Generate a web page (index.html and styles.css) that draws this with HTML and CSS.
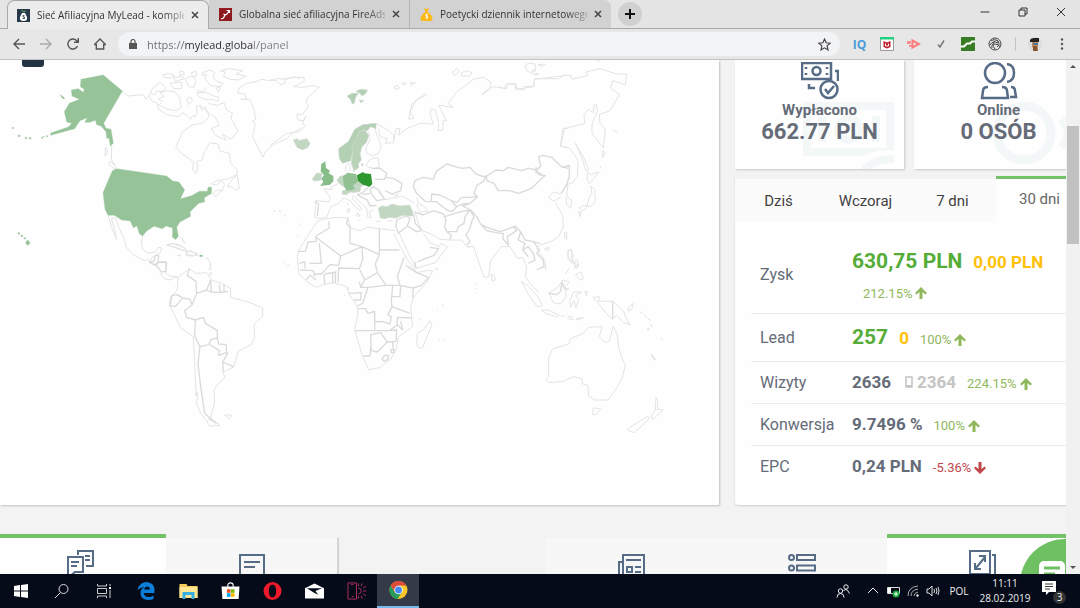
FILE: index.html
```html
<!DOCTYPE html>
<html lang="pl">
<head>
<meta charset="utf-8">
<title>Sieć Afiliacyjna MyLead</title>
<link rel="stylesheet" href="styles.css">
</head>
<body>
<header class="browser">
  <div class="tabstrip">
    <div class="tab tab-current">
      <svg class="favicon" viewBox="0 0 13 13"><path fill="#26384a" d="M0 0h13v13H0z"/><path fill="#fff" d="M5 4h3l2 4q1 4-3.500 4T3 8z"/><path d="m4.500 1 2 2 2-1" stroke="#6cc06c" fill="none"/><path d="M7.500 6.500h-1.500v1.500h1.500v1.500h-2" stroke="#26384a" fill="none" stroke-width=".8"/></svg>
      <button class="tab-title">Sieć Afiliacyjna MyLead - komple</button>
      <button class="tab-close" aria-label="Zamknij"><svg viewBox="0 0 8 8"><path d="m1 1 6 6m0-6-6 6"/></svg></button>
    </div>
    <div class="tab">
      <svg class="favicon" viewBox="0 0 13 13"><path fill="#8e1a20" d="M0 0h13v13H0z"/><path d="m2 11 2.500-1L6 7l2-1 2-3M7.500 2.500h3V5M4.500 6l1.500 1" stroke="#fff" fill="none" stroke-width="1.200"/></svg>
      <button class="tab-title">Globalna sieć afiliacyjna FireAds -</button>
      <button class="tab-close" aria-label="Zamknij"><svg viewBox="0 0 8 8"><path d="m1 1 6 6m0-6-6 6"/></svg></button>
    </div>
    <div class="tab tab-last">
      <svg class="favicon" viewBox="0 0 13 13"><path fill="#fbb91c" d="m4 0 2 1 3-1-1.500 4q5 3 5 7 0 2-2 2H2.500q-2 0-2-2 0-4 5-7z"/><path d="M8 6.500H6v1.700h1.500V10h-2M6.700 5.700v5" stroke="#fff" fill="none" stroke-width=".8"/></svg>
      <button class="tab-title">Poetycki dziennik internetowego</button>
      <button class="tab-close" aria-label="Zamknij"><svg viewBox="0 0 8 8"><path d="m1 1 6 6m0-6-6 6"/></svg></button>
    </div>
    <button class="tab-new" aria-label="Nowa karta"><svg viewBox="0 0 10 10"><path d="M5 0v10M0 5h10"/></svg></button>
    <div class="window-buttons">
      <button aria-label="Minimalizuj"><svg viewBox="0 0 10 10"><path d="M.5 5h9"/></svg></button>
      <button aria-label="Przywróć"><svg viewBox="0 0 10 10"><path d="M1 3h6v6H1zM3 3V1h6v6H7"/></svg></button>
      <button aria-label="Zamknij okno"><svg viewBox="0 0 10 10"><path d="m1 1 8 8m0-8-8 8"/></svg></button>
    </div>
  </div>
  <div class="toolbar">
    <nav class="nav-buttons">
      <button aria-label="Wstecz"><svg viewBox="0 0 12 12"><path d="M12 6H1m5-5L1 6l5 5"/></svg></button>
      <button class="faded" aria-label="Dalej"><svg viewBox="0 0 12 12"><path d="M0 6h11M6 1l5 5-5 5"/></svg></button>
      <button aria-label="Odśwież"><svg viewBox="0 0 12 12"><path d="M10.500 8A5 5 0 1 1 9.500 2.500L11 4M11.300 0v4.300H7"/></svg></button>
      <button aria-label="Strona główna"><svg viewBox="0 0 12 12"><path d="M.5 6.500 6 1l5.500 5.500H9.700V11H2.300V6.500z"/></svg></button>
    </nav>
    <div class="omnibox">
      <svg class="lock" viewBox="0 0 8 10"><path fill="#555" d="M0 4h8v6H0z"/><path d="M2 4V2.500a2 2 0 0 1 4 0V4" fill="none" stroke="#555" stroke-width="1.200"/></svg>
      <input class="address" type="text" aria-label="Adres" value="https://mylead.global/panel">
      <button class="star" aria-label="Dodaj zakładkę"><svg viewBox="0 0 12 12"><path d="m6 1 1.500 3.400 3.700.4-2.800 2.500.8 3.700L6 9.100 2.800 11l.8-3.700L.8 4.800l3.700-.4z"/></svg></button>
    </div>
    <div class="extensions">
      <button class="iq" aria-label="IQ">IQ</button>
      <button aria-label="Ochrona"><svg viewBox="0 0 14 14"><path d="M.5 1h13v12.500H.5z" fill="#fff" stroke="#999"/><path fill="#20d080" d="M0 0h14v2.500H0z"/><path fill="#c01c2c" d="m3.500 4 3.500 1.500L10.500 4v6L7 11.500 3.500 10z"/><path d="M5.500 6.500v2.500h3V6.500" fill="none" stroke="#fff"/></svg></button>
      <button aria-label="Wideo"><svg viewBox="0 0 14 14"><path d="M5.500 3.500v7L12 7z" fill="none" stroke="#fa7d7d" stroke-width="2"/><path d="M0 4h4v3H0zM2 8h3v2H2z" fill="#fa8c8c"/></svg></button>
      <button aria-label="Gotowe"><svg viewBox="0 0 14 14"><path d="m4 7.500 2 2.500 4-6.500" fill="none" stroke="#777" stroke-width="1.500"/></svg></button>
      <button aria-label="Statystyki"><svg viewBox="0 0 14 14"><path fill="#397d24" d="M0 0h14v14H0z"/><path d="M0 9.500h3l3-3h3l2-2h3" fill="none" stroke="#fff" stroke-width="2"/></svg></button>
      <button aria-label="Narzędzie"><svg viewBox="0 0 14 14" fill="none" stroke="#454545"><circle cx="7" cy="7" r="6"/><path d="M3 4q4-3 8 1M2 8q3-5 8-2M4 11q-1-4 3-4t5 3M7 4q-4 3 0 8M9 3q4 4 0 7"/></svg></button>
      <i class="bar"></i>
      <button aria-label="Profil"><svg viewBox="0 0 14 14"><circle cx="7" cy="7" r="7" fill="#dcdcdc"/><path fill="#c98a52" d="M4 4h6v6l-3 2-3-2z"/><path fill="#222" d="M2 5V3q1-2 4-2h5v4z"/><path fill="#4774a8" d="M5 6h5v2H5z"/><path fill="#8a542c" d="M5 9h4l1 5H5z"/></svg></button>
      <button class="menu" aria-label="Menu"><svg viewBox="0 0 14 14" fill="#555"><circle cx="7" cy="2.500" r="1.200"/><circle cx="7" cy="7" r="1.200"/><circle cx="7" cy="11.500" r="1.200"/></svg></button>
    </div>
  </div>
</header>

<div class="viewport">
  <main class="page">
    <div class="top-row">
      <section class="map-card">
        <button class="zoom-out" aria-label="Pomniejsz mapę"></button>
        <svg class="map" viewBox="0 60 719 446" role="img" aria-label="Mapa świata">
          <!-- North America -->
          <g transform="translate(0 60) scale(.33333)">
            <g class="thin">
              <path d="M367 93 384 108 430 104 438 118 447 105 455 122 472 130 475 148 500 164 535 170 548 158 560 166 572 178 578 165 584 172 592 158 588 140 600 136 605 150 616 140 628 170 606 190 578 194 548 215 527 262 545 280 580 305 578 330 588 340 593 325 590 305 606 300 614 275 630 248 655 252 658 272 680 278 688 280 692 310 712 330 710 345 680 358 650 362 634 372 650 375 665 362 674 374 665 392 647 411 640 400 650 390 670 392"/>
              <path d="M712 345 718 385 706 390 700 382 682 379 696 359z"/>
              <path d="m450 100 10-18 20-14 18 14-10 12-20 0-3 10zM488 44l20-3 16 5-12 8-20-2zM540 33l12 3 0 8-12 2zM480 98l20-6 24 3 14 17 6 30-14 10-25-3-28-14 10-10-12-8 18-8zM556 58l18-10 14 12-6 22-16-2zM574 38l14-4 2 14-12 2zM560 118l10-8 8 12-12 12zM590 98l30 0 22 10 14 4-2 12-18-6-16 2-24-10zM608 38l22-8 14 8-6 12 12 14 20 6-12 10-28-4-16-20 6-12-14 2zM660 32l30-6 38 6-20 10 30 6-22 12-26-2-20-10 6-12zM648 86l14-8-6 18zM520 52l24-2 10 6-28 8zM510 70l34-4 2 20-26 0z"/>
              <path d="M625 130 650 136 672 128 680 150 698 160 692 174 714 212 694 238 668 222 678 240 646 226 634 206 658 196 646 172 628 160 600 136M590 90l16 6 14-12"/>
              <path d="M900 55 882 51 858 58 828 56 808 62 786 58 764 66 740 70 718 84 712 98 734 102 740 118 722 118 750 118 762 150 768 178 756 184 766 192 758 230 774 262 789 292 796 276 820 254 860 236 880 218 900 206"/>
              <path d="M335 258 334 300 348 320 344 328 326 312 328 304 346 316M316 262l6 4-2 16-5 6zM324 464 334 500 350 538 344 508 334 476 346 474 356 500 374 540 378 560 400 584 432 602 446 598 476 628M428 527 424 547 428 568 444 580 466 576 474 562 486 564 480 578 456 592 450 604"/>
              <path d="m500 556 18-6 20 4 18 12 4 8-18-6-20-8zM560 576l14-4 18 14-12 0-16-1zM534 586l8 2zM540 530l14 16M546 542l12 10M820 452l6 2M838 450l4 4M852 464l6 4M840 460l3 3M618 592l6 4 8 14 0 16-6 2"/>
            </g>
            <g class="fill-mid">
              <path d="m243 58 67-13 57 48-56 97 7 15 15 3 7 42-9 8-4-23-7 0-2-20-15-17-13-4-4-13-16 6-16 0 8-14-22 9-16 24-72 20v-7l53-18 10-11-15-4-7-31 15-25 30-12-22-10-2-18 21-4 15 11 3-9-12-8zM180 104l10 6 4 7-6-1zM37 202h4v4h-4zM55 225h5v5h-5zM75 232h5v4h-5zM87 233h6v4h-6zM124 232l10-3-8 7zM139 227h5v3h-5z"/>
              <path d="m350 326 150 22 18 15 19 3 17 24-13 26 34-9 23-13h24l2-12 10-1 1 19-22 13 1 13-18 4-26 26 2 13-32 17-10 15 5 28-8 10-10-8 1-27-20-6-11 8-25-7-22 14-12 15-10-7-7-23-11 5-9-20-26-3-22-14h-19l-9-19-6-49 28-66z"/>
              <path d="M54 518h5v5h-5zM63 525h5v5h-5zM72 533h5v4h-5zM78 544l6-4 7 10-8 6-5-4zM599 585h8v5h-8z"/>
            </g>
          </g>
          <!-- South America -->
          <g transform="translate(90 230) scale(.33333)">
            <path class="thin" d="M206 95 228 95 231 99 226 129 242 139 256 139 264 142M210 128 222 146 240 150 262 140M240 228 272 294 310 320 318 480 322 500 320 522 332 550 350 572 358 588 390 586 362 564 374 516 372 480 384 462 404 444 400 426 432 410 444 364 484 344 494 322 492 284 518 258 518 234 480 218 422 202 422 176 400 162 364 150 350 128 318 130 298 116 264 142 262 180 242 200 238 228M404 556l10-2 12 3-10 8zM317 488h6v8h-6zM350 85l8 5M360 100v8M362 114v6M360 128h4v6h-4zM230 44 248 41 282 53 288 63 262 56zM288 66l12-2 24 8-14 6-20-1zM262 76h10"/>
            <path class="thick" d="m178 96 14-2 4-18 10 0-2 22-8 8-16-8zM206 98l22-2 0 28-14 2-12-18-6-6 10-6M298 116 292 136 318 154 320 190 350 180 364 186 388 188 414 184M362 150 350 180M362 150 364 186M388 164 390 186M402 162V184M320 190 306 225 300 208 278 204 262 194 246 196 240 226 256 230 276 206M306 225 284 242 290 262 316 270 340 262 346 280 382 302 382 324 364 328 356 344 330 350 314 318 316 270M382 324 386 342 408 344 410 368 386 376 388 362 360 344M330 350 324 400 332 470 344 550 362 566M414 368 398 396 400 426M398 396 430 410M356 566 380 580"/>
          </g>
          <!-- Europe and Asia -->
          <g transform="translate(270 60) scale(.33333)">
            <g class="thin">
              <path d="M0 60 18 62 32 74 46 69 42 57 62 53 102 52 103 64 71 80 101 82 127 76 148 82 112 114 108 128 116 138 98 162 80 165 84 180 102 182 108 168 98 186 104 200 84 216 50 220 28 236 0 256M318 190 356 212 372 228 370 248 345 250 352 236 330 230 326 206M372 240 378 206 390 206 386 226 410 206 450 190 490 192 480 160 484 146 496 150 506 190 504 212 518 210 520 180 530 182 506 136 550 142 534 130 560 96 610 58 640 52 662 66 660 86 636 104 640 98 668 80 710 86 712 72 738 72 740 88 790 80 794 58 890 46"/>
              <path d="M546 38 560 26 568 34 556 46zM574 38l18-6 14 6-6 10-26 0zM372 80l10-4 6 8-12 4zM398 68l10 2-6 6zM420 68l10 0-4 8zM432 68l6 2M762 20l12-10 20 0 4 14-14 10 14-4-10 12-18-10 0-10zM804 14l22-2-8 8zM790 44l14-4M418 166 426 132 464 100 468 106 440 120 426 144 420 156 432 174 416 178z"/>
              <path d="M314 202 318 216 334 260 326 280 306 288 288 278 288 262 300 240 296 214M228 335l-2-16 10-10 6 14-6 12M245 332l10 2M298 300l12-6 14 0 4 26-12 6-20-4-8-6z"/>
              <path d="M206 370 182 382 188 388 162 386 180 412 178 426 138 422 134 470 146 476 170 472 182 440 206 430 222 414 240 422 256 440 270 452 274 446 256 424 246 414 250 406 274 430 290 444 292 470 302 474 298 456 310 448M264 458l6 10-12 0zM233 428v8M232 446l6 0 0 10-6 0zM266 480l4 4M318 484h14M355 482h12M325 395l20 24 30-6 12-16M360 398l14 8 12-2M376 414l20-6 36 20M440 412 446 430 466 442 474 454 450 456 440 432"/>
              <path d="M434 454 446 490 456 512 480 520 510 538 540 540 575 540 590 560 600 560"/>
              <path d="m895 205-16 0-8 54 24 4M10 452l4 2M28 450l3 6M44 466l4 3M86 492l4 3M80 527l4 4M90 530l3 1M102 530l2 1M40 606l6 4M50 620l8-6"/>
            </g>
            <path class="thick" d="M134 424 146 432 142 468M435 362 460 352 490 358 498 335 530 312 575 325 600 322 618 342 640 350 648 348 640 365 622 375 612 400 622 410 600 412 575 412 560 428 540 420 510 405 485 402 484 425 465 424 440 400 430 380zM650 348 678 330 700 332 715 322 755 332 775 325 800 330 808 345 826 346 808 362 785 385 745 400 720 392 685 392 672 370 650 362zM800 330 812 318 806 290 820 286 845 292 875 320 895 325M612 402 622 412 600 430 578 438 602 450 620 470 632 492 650 502 690 515 710 508 735 498 752 515 765 540 790 545 810 550M484 425 500 425 530 450 545 455 560 440 545 425M560 440 578 432 600 430M434 456 460 465 490 452 520 462 528 480 524 500 530 515 544 525 540 540M524 470 555 460 575 455 600 450 585 470 582 490 565 500 560 515 530 515M600 450 612 470 605 485 600 505 588 525 600 545 590 555M632 492 650 512 690 520 700 520 698 535 715 555 712 530 740 512 730 500M752 515 745 540 765 550 758 570 775 590M790 545 808 570 800 580 820 600 822 620 800 630M758 570 775 560 790 580 795 600 775 610"/>
            <path class="thick" d="M380 480 408 468 420 475 412 498 385 520 378 500zM430 462 436 490 456 512M412 498 440 515 456 512M306 326 328 324 350 340 344 358 314 358M348 352 372 356 396 370 392 392 366 402 346 392M310 380 326 390 344 418 320 422 304 400 300 388 310 380M300 376 278 398 262 404 276 412 292 420 300 438 320 436M278 404 300 400"/>
            <g class="fill-light">
              <path d="m70 240 12-4 4 6 24-6 10 14-6 12-16 7-16-6zM127 358l12-18 16 0-2 20-20 3zM201 362l10-14 12 0 0 18-4 14zM218 392l16-4 16-2 0-14 14-8 20 10-12 6-2 14-20 4-10-2-10 8-14-2zM325 444l10-6 16 2 16-8 20 6 32-2 10 20-2 12-30-2-18 8-22-2-12 4-14-2z"/>
              <path class="norway" d="m231 108 16-8 18 0-8 12-4 18-6 2-6-14zM258 94l14-6 20 2-4 10-12 8-6-8zM268 120l14 2-10 6zM318 190l0 16-16-6-10 12-16-2-20 36-8 30-6 26-24 8-10-14-2-30 30-22 18-36 24-14z"/>
              <path class="sweden" d="m270 212 16 0 10 14-6 20-14 14-6 20 4 20-8 10 0 14-14 8-8-22 4-30-2-22zM274 310l6 4-4 4z"/>
            </g>
            <path class="fill-uk" d="m154 312 12-8 2 20 12 8-4 8 14 8 0 16-10 10-30 4 10-12-6-10 8-10-10-12z"/>
            <path class="fill-de" d="m219 348 14-10 26 4 4 24-14 10 6 12-24 4-10-14z"/>
            <path class="fill-pl" d="m261 346 18-10 4 4 20 2 4 30-8 8-20-6-16-12z"/>
          </g>
          <!-- East Asia and Siberia -->
          <g transform="translate(500 60) scale(.33333)">
            <path class="thin" d="M0 80 12 86 20 70 48 72 46 86 72 90 72 80 102 78 104 56 178 56 190 46 212 46 216 58 264 46 258 36 300 26 350 42 380 42 376 74 338 62 332 84 358 104 330 152 298 164 300 190 316 208 310 264 276 220 276 192 292 154 290 134 282 134 280 158 264 148 252 166 254 190 194 206 182 258 208 264 234 300 232 350 218 368 204 372 182 402 160 396 146 412 160 424 184 410M204 372 200 408 216 422 212 444 200 434 198 410M166 428 188 466 190 500 176 530 150 546 118 556 110 566 134 600 138 630"/>
            <path class="thin" d="m226 250 24 40 16 38-8 4-14-42zM262 336 272 344 296 336 268 372 262 360zM300 318l4 8M308 272l8 6-8 14zM338 210l14 6M272 378 284 388 286 424 272 440 250 436 238 444 246 452 258 446 268 412 276 400zM236 454l8 2-4 14zM104 46l14-4M290 4l12-4M194 518l6-2 0 22-6-4zM204 574l10-6 6 20-4 22-12-12zM222 604l10-4 4 20-10 4zM134 566l12-4-2 10z"/>
            <path class="thick" d="M185 322 208 316 208 350 200 372 184 400M108 322v16l18 4"/>
          </g>
          <!-- Africa, southern Asia and Oceania -->
          <g transform="translate(280 200) scale(.33333)">
            <path class="thin" d="M130 58 112 64 84 106 56 152 52 170 56 220 80 245 108 262 130 254 160 248 186 256 204 262 206 280 230 316 234 340 224 388 236 430 248 470 258 490 266 510 300 502 332 478 348 450 356 410 398 380 392 320 400 292 440 248 458 212 440 212 410 218 382 178 360 140 342 100M130 58 170 52 204 54 212 84 240 92 260 82 300 86 345 92M348 80 358 100 380 150 408 205 466 188 502 140 482 130 478 140 450 128 430 100M562 142 580 138 612 232 626 230 632 182 664 140 690 140 712 175 728 172 740 200 736 230 750 250 776 278M634 222l10 8 2 10-10 4zM724 244 744 258 772 288 788 318 772 320 748 288zM784 330 804 330 838 346 830 350 800 342zM842 348h14M862 352l10-4 8 10-12 0zM888 356l22-4-16 8z"/>
            <path class="thin" d="M806 278 832 264 848 240 868 246 856 260 858 290 842 312 820 308zM880 276h26L886 286 896 298 888 324 882 302 872 322 870 302zM914 276l8-2-2 14zM940 292 958 290 956 304 998 304 1030 332 1038 352 1050 374 1030 368 1010 346 996 358 970 330 962 318zM1044 324l16-14-4 16-10 8zM1080 336l8 4M1092 344l8 10M1104 356l10 6M1112 372l6 10M1142 412l6 10M1114 462l14 18-8-2zM1102 386h5v4h-5zM864 150l12 0-2 26 12 14-8 0-14-20zM882 190l12 4-6 12zM886 224l18-8 6 20-10 4zM868 204l-12 20M418 446 410 432 412 400 432 388 450 362 456 376 436 422 428 442z"/>
            <path class="thin" d="M797 538 806 530 806 475 818 446 866 432 872 416 910 400 926 382 966 380 958 410 976 428 988 424 1000 378 1012 404 1016 444 1028 480 1036 494 1028 530 1014 558 984 600 944 600 926 588 924 556 908 552 906 536 880 530 850 544 806 548zM940 624 962 626 948 644 938 644zM1128 592 1134 604 1132 628 1150 630 1118 658 1114 650 1126 630zM1104 648 1108 656 1062 698 1042 690 1050 682zM416 354l8 8M470 330l4 2M486 312l6 10M476 424l4-4M488 420l5-3M586 252l4 4M588 264v4M590 276v3M206 264l-8 4M192 284l4 2M464 205l12 4"/>
            <path class="thick" d="M146 64 148 84 108 108 108 124 84 126 76 154 54 154M108 112 182 168 246 140 210 130 210 80M204 54 200 70 212 84M246 140 298 164 298 86M300 150H358M118 130 124 190 88 190M182 168 176 196 150 194 124 222 100 222M246 140 248 178 238 206 176 204 174 246M298 164 286 192 292 218 254 240 240 210M292 218 318 256 360 256 352 230 372 172M360 256 400 264 424 256 446 232 410 218 378 196M400 264 398 294M338 258 334 300 336 320 390 340M336 290 360 290 362 258M254 240 242 262 264 262 318 256M264 262 248 310 232 318M242 262 238 245M206 280 244 278 242 300 222 300M232 326 256 326 264 340 284 334 284 366 306 364 330 372 334 350 324 344 336 320M284 366 284 392 224 392M284 392 328 392 352 374 352 352 396 354M352 374 368 390 362 364M302 398 322 426 348 424 350 390 328 392M322 426 292 456 274 452 272 404 302 398M272 440 270 468 250 468M306 476l8-10 12 0-2 12-12 6zM332 450l10-2 0 10-8 0zM338 424 340 450M132 222 134 254M158 220V250M166 218V250M134 222 170 216M60 210 100 212 104 230M78 240 90 226 108 240M58 190 74 186 76 206M412 186 430 178 462 166 476 146 450 142M408 205 404 184M806 280 830 284 842 274 846 246 854 266 866 268M998 304V358"/>
          </g>
        </svg>
      </section>

      <aside class="side">
        <div class="cards">
          <section class="stat">
            <svg class="ghost" viewBox="0 0 93 68"><path d="M5 5h83v46H5zM20 15v26M74 15v26" fill="none" stroke-width="8"/><circle cx="47" cy="28" r="11" fill="none" stroke-width="7"/><path d="M56 70q10-15 36-14" fill="none" stroke="#fefefe" stroke-width="14"/><path d="M62 70q8-12 30-12" fill="none" stroke-width="8"/></svg>
            <svg class="stat-icon" viewBox="0 0 38 38"><path d="M1 1h29v16H1zM5 5v2m0 4v2M26 5v2m0 4v2M34 9h3v10M8 22v4h6"/><circle cx="15.500" cy="9" r="4"/><circle cx="28" cy="27.500" r="8.500"/><path d="m24 27 3 4 6-7"/></svg>
            <h2>Wypłacono</h2><p>662.77 PLN</p>
          </section>
          <section class="stat">
            <svg class="ghost" viewBox="0 0 93 68"><circle cx="43" cy="32" r="27" fill="none" stroke-width="9"/><path d="M80 18q14 14 0 28" fill="none" stroke-width="8"/></svg>
            <svg class="stat-icon" viewBox="0 0 38 38"><circle cx="15" cy="11" r="10"/><path d="M8 25q-5 0-5 4l-1 7h26l-1-7q0-4-5-4M27 2q7 1 7 9t-7 9M31 25q4 0 4 4l1 6h-6"/></svg>
            <h2>Online</h2><p>0 OSÓB</p>
          </section>
        </div>
        <section class="panel">
          <div class="periods">
            <button>Dziś</button><button>Wczoraj</button><button>7 dni</button><button class="chosen">30 dni</button>
          </div>
          <table class="figures">
            <tr class="row-tall"><th scope="row">Zysk</th><td><span class="line"><b class="main">630,75 PLN</b><b class="pending">0,00 PLN</b></span><span class="line trend second">212.15%<svg class="arrow" viewBox="0 0 12 12"><path d="M6 0 12 6l-1.500 1.500-3-2.500v7h-3V5l-3 2.500L0 6z"/></svg></span></td></tr>
            <tr class="row-mid"><th scope="row">Lead</th><td><span class="line"><b class="main">257</b><b class="pending">0</b><span class="trend">100%<svg class="arrow" viewBox="0 0 12 12"><path d="M6 0 12 6l-1.500 1.500-3-2.500v7h-3V5l-3 2.500L0 6z"/></svg></span></span></td></tr>
            <tr><th scope="row">Wizyty</th><td><span class="line"><b>2636</b><b class="mobile"><svg viewBox="0 0 8 12"><path d="M1 1h6v10H1z" fill="none" stroke="#c4c4c4" stroke-width="1.500"/><path d="M1 9h6v2H1z" fill="#c4c4c4"/></svg>2364</b><span class="trend">224.15%<svg class="arrow" viewBox="0 0 12 12"><path d="M6 0 12 6l-1.500 1.500-3-2.500v7h-3V5l-3 2.500L0 6z"/></svg></span></span></td></tr>
            <tr><th scope="row">Konwersja</th><td><span class="line"><b>9.7496 %</b><span class="trend">100%<svg class="arrow" viewBox="0 0 12 12"><path d="M6 0 12 6l-1.500 1.500-3-2.500v7h-3V5l-3 2.500L0 6z"/></svg></span></span></td></tr>
            <tr><th scope="row">EPC</th><td><span class="line"><b>0,24 PLN</b><span class="trend down">-5.36%<svg class="arrow" viewBox="0 0 12 12"><path d="M6 12 0 6l1.500-1.500 3 2.500V0h3v7l3-2.500L12 6z"/></svg></span></span></td></tr>
          </table>
        </section>
      </aside>
    </div>

    <div class="bottom-row">
      <div class="sections left">
        <button class="chosen first" aria-label="Wiadomości"><svg viewBox="0 0 28 28"><path d="M1 8h15v15H8l-6 5H1zM4 13h8M4 17h6M11 6V2h15v15h-7M18 7h5M18 11h5"/></svg></button>
        <button aria-label="Komentarze"><svg viewBox="0 0 28 28"><path d="M2 3h24v20H13l-6 5v-5H2zM6 10h16M6 15h11"/></svg></button>
      </div>
      <div class="sections right">
        <button aria-label="Aktualności"><svg viewBox="0 0 28 28"><path d="M6 3h21v23H6zM6 10H2v16M9 8h15M10 15h5v5h-5zM18 15h6M18 20h6"/></svg></button>
        <button aria-label="Lista"><svg viewBox="0 0 28 28"><circle cx="3.500" cy="5.500" r="2.500"/><circle cx="3.500" cy="16" r="2.500"/><path d="M9 3h18v5H9zM9 13.500h18v5H9z"/></svg></button>
        <button class="chosen wide" aria-label="Rozwiń"><svg viewBox="0 0 28 28"><path d="M2 2h20v23H2zM24 6h3v22H9M8 19 17 8M11 7h6v6M7 14v6h6"/></svg></button>
      </div>
    </div>
  </main>
  <button class="chat" aria-label="Czat"><svg viewBox="0 0 26 24"><rect width="26" height="24" rx="5" fill="#fff"/><path d="M5 7h16M5 13h11" stroke="#6fc063" stroke-width="3"/></svg></button>
  <div class="scrollbar"><i class="up"></i><span class="thumb"></span><i class="down-arrow"></i></div>
</div>

<footer class="taskbar">
  <button class="start" aria-label="Start"><svg viewBox="0 0 14 14" fill="#fff"><path d="M0 2l6-1v5.500H0zM7 .9 14 0v6.500H7zM0 7.500h6V13l-6-1zM7 7.500h7V14l-7-1z"/></svg></button>
  <button aria-label="Szukaj"><svg viewBox="0 0 14 14" fill="none" stroke="#ddd"><circle cx="8.500" cy="5" r="4.500"/><path d="M5.500 8.500 0 14"/></svg></button>
  <button aria-label="Widok zadań"><svg viewBox="0 0 14 14" fill="none" stroke="#ccc"><path d="M.5 0v2h9V0M.5 4.500h9v5h-9zM.5 14v-2h9v2M13 0v2M13 6v8"/><path d="M13 3v2" stroke-width="2" stroke="#fff"/></svg></button>
  <button aria-label="Edge"><svg class="big" viewBox="0 0 18 18"><path fill="#0c7fdb" d="M0 8Q2 0 9.500 0 17 1 17 8v3H6q1 4 5 4 3 0 5-1.500V17q-2 1-6 1-7-1-7-7 0-4 4-6-3 0-7 3zM6.500 7.500h6Q12 4.500 9.500 4.500 7 5 6.500 7.500z"/></svg></button>
  <button aria-label="Pliki"><svg class="big" viewBox="0 0 18 18"><path fill="#f5cc59" d="M0 2h7l1 2h10v12H0z"/><path fill="#ffe695" d="M0 5h18v11H0z"/><path fill="#39aee0" d="M3 10h12v7h-3v-4H6v4H3z"/></svg></button>
  <button aria-label="Sklep"><svg class="big" viewBox="0 0 20 20"><path d="M7 6V4q0-3 3-3t3 3v2" fill="none" stroke="#fff" stroke-width="1.200"/><path fill="#fff" d="M0 5h20l-1 14H1z"/><path fill="#f04f24" d="M6 8h4v4H6z"/><path fill="#7eba00" d="M10.500 8h4v4h-4z"/><path fill="#00a3ee" d="M6 12.500h4v4H6z"/><path fill="#ffb800" d="M10.500 12.500h4v4h-4z"/></svg></button>
  <button aria-label="Opera"><svg class="big" viewBox="0 0 20 20"><path fill="#ee1a2b" fill-rule="evenodd" d="M10 0a10 10 0 1 0 0 20 10 10 0 0 0 0-20zm0 3c3 0 4 3 4 7s-1 7-4 7-4-3-4-7 1-7 4-7z"/></svg></button>
  <button aria-label="Poczta"><svg class="big" viewBox="0 0 20 18"><path fill="#fff" d="m0 6 10-5 10 5v11H0z"/><path fill="#050d1b" d="m2 6 16 0-7 3 3 4-4-2z"/></svg></button>
  <button aria-label="Telefon"><svg class="big" viewBox="0 0 20 18" fill="none" stroke="#b1305d"><path d="M1 .5h9v17H1zM4 2h3M5 15h2M20 4l-3 2M20 14l-3-2M16 1l-1 3M16 17l-1-3M12 1v3M12 17v-3M20 9h-3M12 6q3 0 3 3t-3 3"/></svg></button>
  <button class="running" aria-label="Chrome"><svg class="big" viewBox="0 0 20 20"><circle cx="10" cy="10" r="10" fill="#fbc72d"/><path fill="#dd4b3c" d="M1.300 5A10 10 0 0 1 18.700 5H10l-4 8z"/><path fill="#249b5b" d="M1.300 5A10 10 0 0 0 9 20l5-8-8 1z"/><circle cx="10" cy="10" r="4.700" fill="#fff"/><circle cx="10" cy="10" r="3.800" fill="#4587f3"/></svg></button>
  <div class="tray">
    <button aria-label="Osoby"><svg viewBox="0 0 14 14" fill="none" stroke="#eee"><circle cx="10" cy="3" r="2.200"/><circle cx="4.500" cy="7" r="2.200"/><path d="M1 13.500q0-4 3.500-4t3.500 4M7.500 7q1-1.500 2.500-1.500t3.500 4"/></svg></button>
    <button class="slim" aria-label="Ukryte ikony"><svg viewBox="0 0 14 14" fill="none" stroke="#eee"><path d="m2 9 5-5 5 5"/></svg></button>
    <button class="slim" aria-label="Bateria"><svg viewBox="0 0 14 14"><path d="M1.500 3.500h12v6h-12z" fill="none" stroke="#ddd"/><path fill="#fff" d="M2 4h3v5H2z"/><circle cx="10" cy="10" r="3.500" fill="#18a83c"/><path d="M8 10h4M10 8v4" stroke="#fff"/></svg></button>
    <button class="slim" aria-label="Sieć"><svg viewBox="0 0 14 14" fill="none" stroke="#aaa"><path d="M2 12Q2 3 12 2M5 12q0-6 7-7M8 12q0-3 4-4"/><circle cx="11.500" cy="11.500" r="1" fill="#fff"/></svg></button>
    <button class="slim" aria-label="Głośność"><svg viewBox="0 0 14 14" fill="none" stroke="#ddd"><path d="M1 5h2l3-3v10L3 9H1zM8 5q1 2 0 4M10 4q2 3 0 6M12 3q2 4 0 8"/></svg></button>
    <span class="lang">POL</span>
    <time class="clock"><span>11:11</span><span>28.02.2019</span></time>
    <button class="notes" aria-label="Powiadomienia: 3"><svg viewBox="0 0 20 22"><path fill="#fff" d="M0 1h14v11H7l-3 3v-3H0z"/><path d="M3 4h8M3 6.500h8M3 9h5" stroke="#222" stroke-width=".9"/></svg><span class="count">3</span></button>
  </div>
</footer>
</body>
</html>
```
FILE: styles.css
```css
* { box-sizing: border-box; }
body { margin: 0; height: 100vh; display: flex; flex-direction: column; overflow: hidden; background: #f3f3f3; font-family: Roboto, "Liberation Sans", sans-serif; color: #656c78; }
button { margin: 0; padding: 0; border: 0; background: none; font: inherit; color: inherit; display: flex; align-items: center; justify-content: center; }
svg { display: block; flex: none; }

/* Browser frame */
.browser { flex: none; background: #e7e7e7; font-family: "Open Sans", "Noto Sans", sans-serif; }
.tabstrip { height: 29px; display: flex; align-items: stretch; padding-left: 7px; border-bottom: 1px solid #a9a9a9; background: #e5e5e5; }
.tab { flex: 0 1 201px; min-width: 0; display: flex; align-items: center; gap: 7px; padding: 0 9px 0 10px; background: #d2d2d2; border-right: 1px solid #b5b5b5; }
.tab-current { flex-basis: 202px; height: 29px; padding-left: 9px; background: #ececec; border: 1px solid #a9a9a9; border-bottom: 0; border-radius: 7px 7px 0 0; }
.tab-last { border-right: 0; border-radius: 0 7px 0 0; }
.favicon { width: 13px; height: 13px; }
.tab-title { flex: 1; min-width: 0; justify-content: flex-start; white-space: nowrap; font-size: 10px; line-height: 16px; color: #333; mask-image: linear-gradient(90deg, #000 85%, rgb(0 0 0 / 30%)); }
.tab-close svg { width: 8px; height: 8px; fill: none; stroke: #444; stroke-width: 1.500; }
.tab-new { width: 24px; height: 24px; margin: 2px 0 0 7px; border-radius: 50%; background: #d0d0d0; }
.tab-new svg { width: 10px; stroke: #111; stroke-width: 2; }
.window-buttons { margin-left: auto; display: flex; align-items: center; padding-bottom: 4px; }
.window-buttons button { width: 38px; }
.window-buttons svg { width: 10px; fill: none; stroke: #333; stroke-width: 1; }
.toolbar { height: 31px; display: flex; align-items: center; padding: 0 5px; border-bottom: 1px solid #c2c2c2; }
.nav-buttons { display: flex; width: 113px; }
.nav-buttons button { width: 27px; height: 24px; }
.nav-buttons svg { width: 12px; fill: none; stroke: #555; stroke-width: 1.400; }
.nav-buttons .faded svg { stroke: #aaa; }
.omnibox { flex: 1; height: 24px; display: flex; align-items: center; padding: 0 9px 0 11px; border-radius: 12px; background: #f2f3f5; }
.lock { width: 8px; height: 10px; }
.address { flex: 1; min-width: 0; margin-left: 10px; padding: 0; border: 0; outline: 0; font: 11px "Open Sans", "Noto Sans", sans-serif; color: transparent; background: linear-gradient(90deg, #6c6c6c 0 38px, #2d2d2d 38px 107px, #7c7c7c 107px) text; }
.star svg { width: 13px; fill: none; stroke: #444; stroke-width: 1.100; }
.extensions { display: flex; align-items: center; margin-left: 6px; }
.extensions button { width: 27px; height: 24px; }
.extensions svg { width: 14px; height: 14px; }
.extensions .iq { font-size: 12px; font-weight: 700; color: #4a9bd8; }
.extensions .bar { width: 1px; height: 14px; margin: 0 5px 0 7px; background: #c4c4c4; }

/* Dashboard */
.viewport { position: relative; flex: 1; min-height: 0; display: flex; overflow: hidden; }
.page { flex: 1; min-width: 0; overflow: hidden; }
.top-row { display: flex; gap: 16px; margin-right: -17px; height: 445px; }
.map-card { position: relative; flex: 1; min-width: 0; background: #fefefe; box-shadow: 1px 1px 2px #c0c0c0; }
.zoom-out { position: absolute; top: 0; left: 22px; width: 22px; height: 7px; border-radius: 0 0 3px 3px; background: #233344; }
.map { width: 100%; }
.map path { stroke-linejoin: round; }
.thin { fill: none; stroke: #e3e3e3; stroke-width: 3; }
.thick { fill: none; stroke: #dadada; stroke-width: 4; }
.fill-mid { fill: #96c397; stroke: #a5c8a6; stroke-width: 1; }
.fill-light { fill: #c1d7c1; stroke: #cfd8cf; stroke-width: 2; }
.norway { fill: #b3d0b4; }
.sweden { fill: #b9d3b9; }
.fill-uk { fill: #87bd88; }
.fill-de { fill: #92c193; }
.fill-pl { fill: #2f9730; }
.side { flex: 0 0 348px; display: flex; flex-direction: column; gap: 7px; }
.cards { display: grid; grid-template-columns: 1fr 1fr; gap: 10px; height: 109px; }
.stat { position: relative; overflow: hidden; display: flex; flex-direction: column; align-items: center; padding-top: 2px; background: #fefefe; box-shadow: 1px 1px 2px #c8c8c8; }
.stat-icon { position: relative; width: 38px; height: 38px; fill: none; stroke: #566b86; stroke-width: 2.500; }
.ghost { position: absolute; right: 9px; bottom: 0; width: 93px; height: 68px; stroke: #f4f7f8; }
.stat h2 { position: relative; margin: 1px 0 0; font-size: 15px; line-height: 18px; font-weight: 700; }
.stat p { position: relative; margin: 0; font-size: 22px; line-height: 25px; font-weight: 700; }
.panel { flex: 1; display: flex; flex-direction: column; background: linear-gradient(transparent 3px, #fefefe 3px); border-radius: 0 0 4px 4px; box-shadow: 0 1px 2px #ccc; }
.periods { display: flex; align-items: flex-end; font-size: 15px; color: #414141; }
.periods button { flex: 1; height: 43px; background: #fbfbfb; }
.periods .chosen { height: 46px; padding-bottom: 4px; border-top: 3px solid #73c168; background: #fefefe; color: #666; }
.figures { width: calc(100% - 16px); margin: 15px 0 0 16px; border-collapse: collapse; }
.figures tr { height: 42px; border-bottom: 1px solid #ebebeb; }
.figures tr:last-child { border-bottom: 0; }
.figures .row-tall { height: 76px; }
.figures .row-mid { height: 48px; }
.figures th { width: 101px; padding: 0 0 0 9px; text-align: left; font-size: 16px; font-weight: 400; }
.figures td { padding: 0; font-size: 17px; color: #656c78; }
.line { display: flex; align-items: baseline; gap: 11px; white-space: nowrap; }
.main { font-size: 21px; line-height: 26px; color: #55ad38; }
.pending { color: #ffc107; }
.mobile { display: inline-flex; align-items: center; gap: 4px; margin-left: 3px; color: #c4c4c4; }
.mobile svg { width: 8px; height: 12px; }
.trend { display: inline-flex; align-items: center; gap: 3px; font-size: 13px; color: #8fb85c; }
.second { margin: 12px 0 0 11px; }
.arrow { width: 12px; height: 12px; fill: currentColor; }
.down { color: #c0474b; }
.bottom-row { display: flex; justify-content: space-between; height: 40px; margin: 29px -11px 0 0; }
.sections { display: flex; align-items: flex-end; }
.left { box-shadow: 2px 4px 1px #d3d3d3; }
.sections button { width: 171px; height: 36px; align-items: flex-start; padding-top: 14px; background: #f7f7f7; }
.sections svg { width: 28px; height: 28px; fill: none; stroke: #566b86; stroke-width: 2; }
.sections .chosen { height: 40px; padding-top: 11px; border-top: 4px solid #73c168; background: #fefefe; }
.sections .first { width: 166px; padding-right: 4px; }
.sections .wide { width: 190px; }
.chat { position: absolute; right: -30px; top: 479px; width: 90px; height: 90px; align-items: flex-start; padding: 22px 26px 0 0; border-radius: 50%; background: #6fc063; }
.chat svg { width: 26px; }
.scrollbar { position: relative; flex: 0 0 14px; display: flex; flex-direction: column; align-items: center; justify-content: space-between; padding: 5px 0; background: #f1f1f1; }
.up, .down-arrow { border: 3px solid transparent; }
.up { border-bottom-color: #555; border-top: 0; }
.down-arrow { border-top-color: #555; border-bottom: 0; }
.thumb { position: absolute; top: 66px; width: 12px; height: 118px; background: #c1c1c1; }

/* Taskbar */
.taskbar { flex: 0 0 34px; display: flex; background: #050b19; color: #eee; font-family: "Open Sans", "Noto Sans", sans-serif; }
.taskbar > button { width: 42px; }
.taskbar > .start { width: 41px; }
.taskbar svg { width: 14px; height: 14px; }
.taskbar .big { width: 19px; height: 18px; }
.taskbar > .running { background: #343a47; border-bottom: 2px solid #76b9ed; }
.tray { margin-left: auto; display: flex; align-items: center; padding-right: 12px; font-size: 10px; }
.tray button { width: 41px; height: 34px; }
.tray .slim { width: 20px; }
.lang { width: 32px; text-align: center; }
.clock { width: 60px; display: flex; flex-direction: column; align-items: center; line-height: 15px; }
.tray .notes { position: relative; width: 33px; }
.taskbar .notes svg { width: 20px; height: 22px; }
.count { position: absolute; right: 2px; bottom: 4px; width: 13px; height: 13px; border-radius: 50%; background: #333; font-size: 10px; line-height: 13px; text-align: center; }
```
